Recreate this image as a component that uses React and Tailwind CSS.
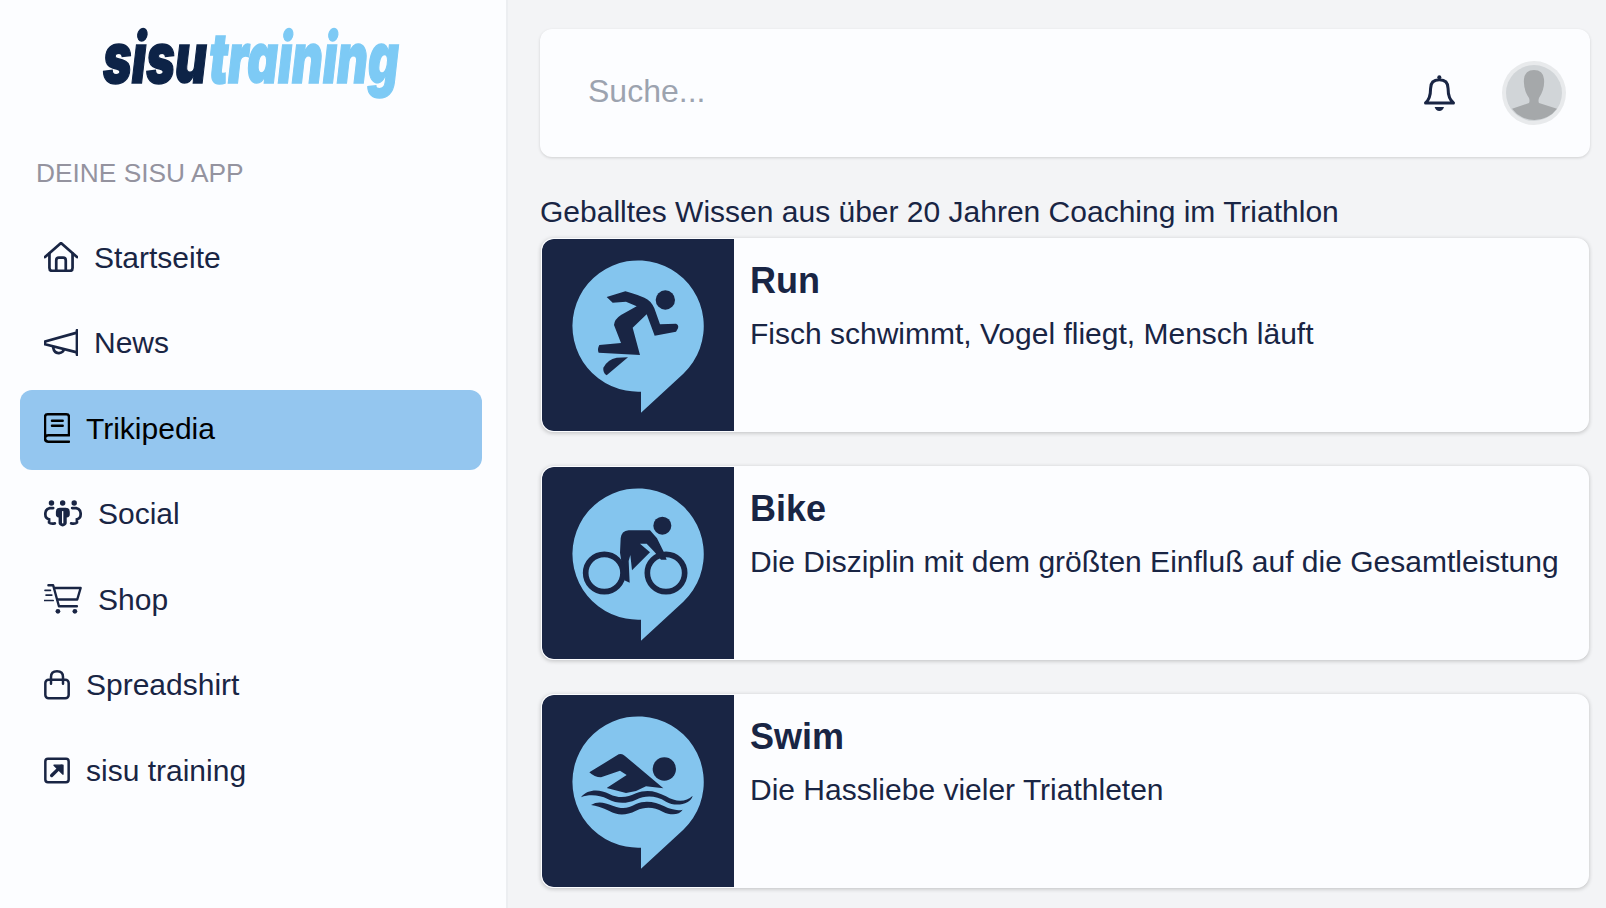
import React from "react";

const ink = "#192544";

const Home = () => (
  <svg width="34" height="30" viewBox="0 0 100 88" fill="none" stroke={ink} strokeWidth="8" strokeLinecap="round" strokeLinejoin="round">
    <path d="M3 44 L50 3 L97 44" />
    <path d="M16 34 V76 Q16 85 25 85 H75 Q84 85 84 76 V34" />
    <path d="M36 85 V54 Q36 46 44 46 H56 Q64 46 64 54 V85" />
  </svg>
);
const News = () => (
  <svg width="34" height="27" viewBox="0 0 100 78" fill="none" stroke={ink} strokeWidth="8" strokeLinecap="round" strokeLinejoin="round">
    <path d="M97 3 V75" />
    <path d="M97 10 L3 36 V44 L97 68" />
    <path d="M27 54 Q30 71 44 70 Q57 68 58 60" />
  </svg>
);
const Book = () => (
  <svg width="26" height="30" viewBox="0 0 78 88" fill="none" stroke="#000" strokeWidth="7.5" strokeLinecap="round" strokeLinejoin="round">
    <path d="M3 74 V11 Q3 3 11 3 H67 Q75 3 75 11 V66 H13 Q3 66 3 75 Q3 85 13 85 H75" />
    <path d="M24 22 H56 M24 37 H56" />
  </svg>
);
const Social = () => (
  <svg width="38" height="27" viewBox="133 30 112 78" fill={ink}>
    <circle cx="155" cy="38" r="8" />
    <circle cx="188" cy="38" r="8" />
    <circle cx="222" cy="38" r="8" />
    <path d="M168 64 Q168 52 180 52 H197 Q209 52 209 64 V72 Q209 80 200 81 V98 Q198 106 188 107 Q178 106 176 98 V81 Q168 80 168 72 Z" />
    <path d="M188 62 V98" stroke="#fcfdff" strokeWidth="4" />
    <path d="M160 53 H150 Q136 56 137 72 Q137 84 148 86 V96 Q152 100 165 98" fill="none" stroke={ink} strokeWidth="8" strokeLinecap="round" />
    <path d="M216 53 H228 Q242 56 241 72 Q241 84 230 86 V96 Q226 100 213 98" fill="none" stroke={ink} strokeWidth="8" strokeLinecap="round" />
  </svg>
);
const Shop = () => (
  <svg width="38" height="31" viewBox="133 280 112 90" fill="none" stroke={ink} strokeWidth="7" strokeLinecap="round" strokeLinejoin="round">
    <path d="M146 283 H160 L177 345 H230" />
    <path d="M163 291 H241 L231 325 H173" />
    <path d="M136 298 H152 M139 312 H156 M134 328 H160" strokeWidth="5" />
    <circle cx="174" cy="360" r="7" fill={ink} stroke="none" />
    <circle cx="224" cy="360" r="7" fill={ink} stroke="none" />
  </svg>
);
const Bag = () => (
  <svg width="26" height="30" viewBox="133 538 78 88" fill="none" stroke={ink} strokeWidth="7.5" strokeLinecap="round" strokeLinejoin="round">
    <rect x="137" y="566" width="70" height="56" rx="10" />
    <path d="M154 578 V558 Q154 541 172 541 Q190 541 190 558 V578" />
  </svg>
);
const External = () => (
  <svg width="26" height="27" viewBox="133 798 78 78" fill="none" stroke={ink} strokeWidth="7.5" strokeLinecap="round" strokeLinejoin="round">
    <rect x="137" y="802" width="70" height="70" rx="8" />
    <path d="M156 852 L185 824" strokeWidth="10" />
    <path d="M163 821 H190 V848 Z" fill={ink} stroke={ink} strokeWidth="4" />
  </svg>
);

const navItems = [
  { label: "Startseite", Icon: Home },
  { label: "News", Icon: News },
  { label: "Trikipedia", Icon: Book, active: true },
  { label: "Social", Icon: Social },
  { label: "Shop", Icon: Shop },
  { label: "Spreadshirt", Icon: Bag },
  { label: "sisu training", Icon: External },
];

const Bubble = ({ dy = 0 }) => (
  <path
    d={`M335 ${482 + dy} L335 ${545 + dy} L462 ${428 + dy} A197 197 0 1 0 335 ${482 + dy} Z`}
    fill="#84c5ee"
  />
);

const RunPic = () => (
  <svg width="192" height="192" viewBox="38 24 576 576" className="block shrink-0">
    <Bubble />
    <g fill={ink}>
      <circle cx="408" cy="207" r="29" />
      <path d="M232 198 L288 181 Q300 183 345 200 Q365 208 375 232 L392 280 L440 278 Q449 281 446 292 L440 302 L376 314 L352 250 L310 290 L332 372 L208 365 Q203 355 210 342 L275 336 L254 282 Q255 265 275 252 L322 226 L290 212 L250 215 Z" />
      <path d="M296 379 L232 433 Q220 425 222 410 Q235 385 262 380 Z" />
    </g>
  </svg>
);

const BikePic = () => (
  <svg width="192" height="192" viewBox="38 18 576 576" className="block shrink-0">
    <Bubble dy={-6} />
    <g fill={ink}>
      <circle cx="399" cy="194" r="27" />
      <path d="M274 232 Q276 210 298 208 L362 208 L383 232 L403 272 L412 296 L395 296 L375 272 L352 248 L332 248 L362 274 L308 328 L303 282 L298 300 L301 365 L285 358 L272 275 Z" />
    </g>
    <g fill="none" stroke={ink} strokeWidth="17">
      <circle cx="225" cy="336" r="56" />
      <circle cx="410" cy="336" r="56" />
    </g>
  </svg>
);

const SwimPic = () => (
  <svg width="192" height="192" viewBox="38 18 576 576" className="block shrink-0">
    <Bubble dy={-6} />
    <g fill={ink}>
      <circle cx="405" cy="240" r="35" />
      <path d="M180 250 L268 196 Q278 192 286 200 L402 298 L350 292 L320 306 L290 312 L232 297 L292 258 L272 245 L215 265 Q195 265 180 250 Z" />
      <path d="M155 325 C175 300 210 300 240 315 C270 330 295 325 320 313 C350 300 380 305 410 322 C440 340 470 340 490 320 C485 345 440 355 410 338 C380 320 350 318 320 332 C290 345 265 345 235 330 C210 318 180 315 155 325Z" />
      <path d="M185 348 C205 335 225 340 250 350 C280 362 295 358 320 345 C350 332 380 340 405 352 C425 362 445 366 460 362 C450 378 425 380 400 368 C375 355 350 352 320 365 C290 380 265 380 240 366 C220 356 200 350 185 348Z" />
    </g>
  </svg>
);

const cards = [
  { title: "Run", text: "Fisch schwimmt, Vogel fliegt, Mensch läuft", Pic: RunPic },
  { title: "Bike", text: "Die Disziplin mit dem größten Einfluß auf die Gesamtleistung", Pic: BikePic },
  { title: "Swim", text: "Die Hassliebe vieler Triathleten", Pic: SwimPic },
];

export default function App() {
  return (
    <div className="flex h-[908px] w-[1606px] overflow-hidden bg-[#f3f4f6] font-['Liberation_Sans',Arial,sans-serif] text-[#192544]">
      <aside className="w-[508px] shrink-0 border-r-2 border-[#eceef1] bg-[#fcfdff] pr-[24px] pl-5">
        <div className="flex h-[130px] justify-center pt-[23px]">
          <div className="relative h-[70px] w-[296px] font-['Inter',sans-serif] text-[70px] leading-[70px] font-black italic">
            <span className="absolute top-0 left-0 origin-left scale-x-[0.7] whitespace-nowrap text-[#0d2347] [-webkit-text-stroke:1.5px_#0d2347]">sisu</span>
            <span className="absolute top-0 left-[106px] origin-left scale-x-[0.68] whitespace-nowrap text-[#7dcaf5] [-webkit-text-stroke:1.5px_#7dcaf5]">training</span>
          </div>
        </div>
        <p className="mt-[27px] ml-4 text-[26.3px] leading-[32px] text-[#94939f]">DEINE SISU APP</p>
        <nav className="mt-[30px] flex flex-col gap-[5.5px]">
          {navItems.map(({ label, Icon, active }) => (
            <a
              key={label}
              className={`flex h-[80px] items-center gap-4 rounded-xl pb-[4px] pl-6 text-[30px] ${active ? "bg-[#94c6ef] text-black" : ""}`}
            >
              <Icon />
              <span>{label}</span>
            </a>
          ))}
        </nav>
      </aside>
      <main className="min-w-0 flex-1 pt-[29px] pr-4 pl-[32px]">
        <header className="flex h-[128px] items-center rounded-xl bg-[#fcfdff] pr-[24px] pl-[48px] shadow-[0_1px_3px_rgba(0,0,0,0.15)]">
          <span className="flex-1 pb-[4px] text-[32px] text-[#9ca3af]">Suche...</span>
          <svg width="33" height="36" viewBox="128 165 97 107" className="mr-[46px]" fill="none" stroke={ink} strokeWidth="9" strokeLinejoin="round">
            <path d="M135 248 Q150 235 150 205 Q150 179 176 179 Q202 179 202 205 Q202 235 218 248 Z" />
            <circle cx="176" cy="172" r="6" fill={ink} stroke="none" />
            <path d="M162 260 H190 Q186 272 176 272 Q166 272 162 260 Z" fill={ink} stroke="none" />
          </svg>
          <svg width="64" height="64" viewBox="0 0 64 64">
            <circle cx="32" cy="32" r="32" fill="#e8eaec" />
            <circle cx="32" cy="32" r="28" fill="#d1d5d8" />
            <path d="M10 47.7 L27 42 Q28 40 27 37 Q21 28 22 18 Q23 9 32 9 Q41 9 42 18 Q43 28 37 37 Q36 40 37 42 L55 47.7 A28 28 0 0 1 10 47.7 Z" fill="#a5a8aa" />
          </svg>
        </header>
        <h1 className="mt-[37px] text-[30px] leading-[36px] font-normal">Geballtes Wissen aus über 20 Jahren Coaching im Triathlon</h1>
        <div className="mt-[8px] flex flex-col gap-[34px] px-[1px]">
          {cards.map(({ title, text, Pic }) => (
            <article key={title} className="flex h-[194px] overflow-hidden rounded-xl border border-[#fcfdff] bg-[#fcfdff] shadow-[0_1px_4px_rgba(0,0,0,0.22)]">
              <div className="rounded-l-xl bg-[#192544]">
                <Pic />
              </div>
              <div className="pt-[20px] pl-4">
                <h2 className="text-[36px] leading-[44px] font-bold">{title}</h2>
                <p className="mt-[13px] text-[30px] leading-[36px]">{text}</p>
              </div>
            </article>
          ))}
        </div>
      </main>
    </div>
  );
}
